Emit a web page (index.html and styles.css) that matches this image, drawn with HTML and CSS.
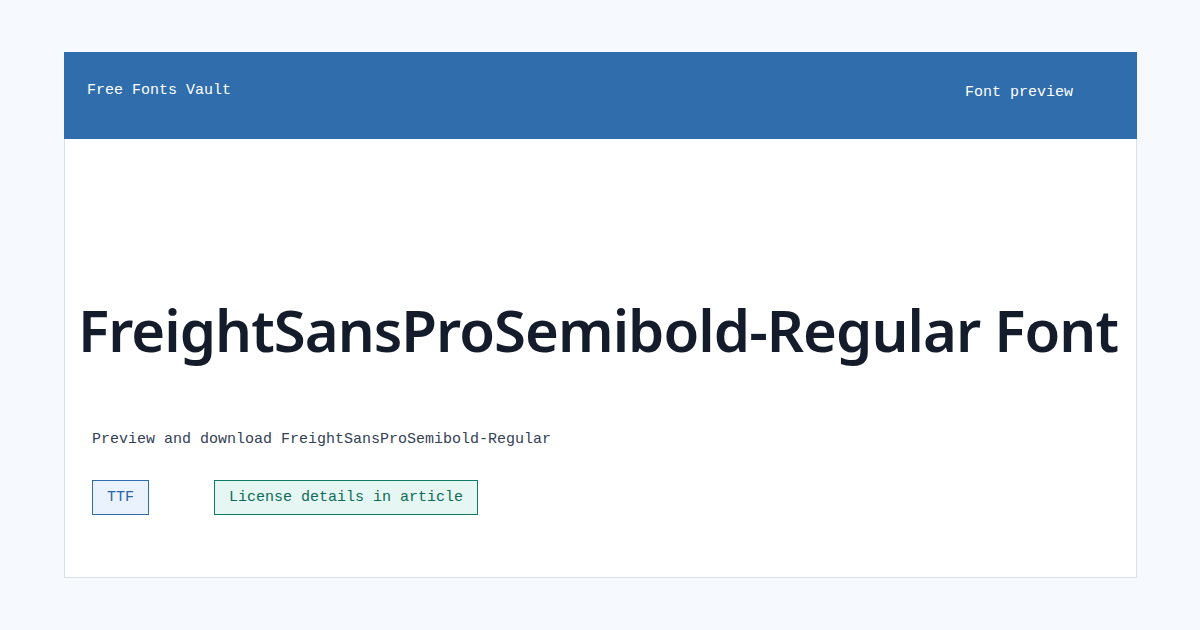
FILE: index.html
```html
<!DOCTYPE html>
<html lang="en">
<head>
    <meta charset="UTF-8">
    <meta name="viewport" content="width=device-width, initial-scale=1.0">
    <title>FreightSansProSemibold-Regular Font</title>
    <link rel="stylesheet" href="styles.css">
</head>
<body>
<div class="card">
    <div class="topbar">
        <span class="brand">Free Fonts Vault</span>
        <span class="tag">Font preview</span>
    </div>
    <div class="content">
        <h1 class="title">FreightSansProSemibold-Regular Font</h1>
        <p class="lead">Preview and download FreightSansProSemibold-Regular</p>
        <div class="badges">
            <span class="badge badge-format">TTF</span>
            <span class="badge badge-license">License details in article</span>
        </div>
    </div>
</div>
</body>
</html>
```

FILE: styles.css
```css
body {
    margin: 0;
    background-color: #f6f9fd;
    font-family: "Liberation Mono", "Courier New", monospace;
}

.card {
    box-sizing: border-box;
    width: 1073px;
    height: 526px;
    margin: 52px 0 0 64px;
    background-color: #ffffff;
    border: 1px solid #d9e1ea;
    border-top: none;
    display: flex;
    flex-direction: column;
}

.topbar {
    flex-shrink: 0;
    height: 87px;
    margin: 0 -1px;
    background-color: #2f6dad;
    color: #ffffff;
    display: flex;
    justify-content: space-between;
    align-items: flex-start;
    padding: 0 64px 0 23px;
    font-size: 15px;
}

.brand {
    margin-top: 30px;
}

.tag {
    margin-top: 32px;
}

.content {
    flex: 1;
    padding: 155px 27px 0 27px;
}

.title {
    margin: 0 -20px;
    padding-right: 5px;
    text-align: center;
    white-space: nowrap;
    font-family: "Noto Sans", sans-serif;
    font-weight: 600;
    font-size: 58px;
    line-height: 72px;
    letter-spacing: -0.95px;
    color: #141c2b;
}

.lead {
    margin: 65px 0 0 0;
    font-size: 15px;
    line-height: 18px;
    color: #334155;
}

.badges {
    display: flex;
    gap: 65px;
    margin-top: 31px;
}

.badge {
    display: inline-block;
    height: 33px;
    line-height: 33px;
    padding: 0 14px;
    font-size: 15px;
    border: 1px solid;
}

.badge-format {
    background-color: #eaf2fd;
    border-color: #2f6dad;
    color: #2a64a3;
}

.badge-license {
    background-color: #e6f6f2;
    border-color: #0f7a66;
    color: #0c6b58;
}
```
